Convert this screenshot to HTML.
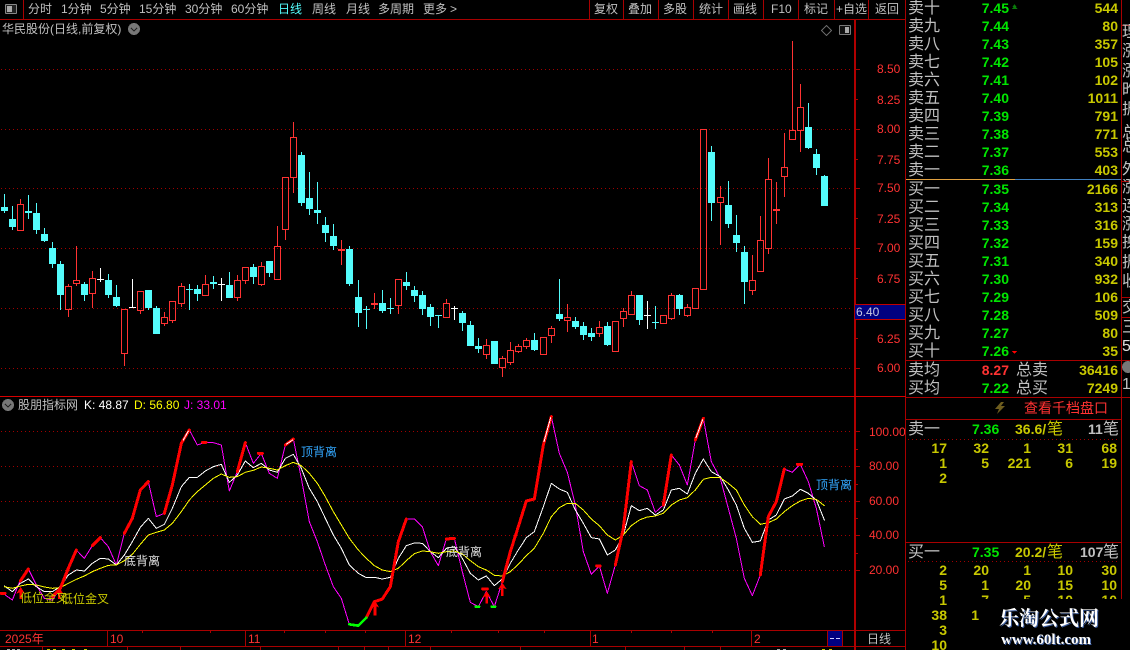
<!DOCTYPE html>
<html lang="zh">
<head>
<meta charset="utf-8">
<title>华民股份</title>
<style>
html,body{margin:0;padding:0;background:#000;width:1130px;height:650px;overflow:hidden}
body{position:relative;font-family:"Liberation Sans","WenQuanYi Zen Hei","Noto Sans CJK SC",sans-serif;color:#c0c0c0;font-size:12px}
.t{position:absolute;white-space:nowrap;line-height:16px;height:16px}
.ax{position:absolute;left:877px;color:#ff3232;font-size:12px;line-height:16px;letter-spacing:0;white-space:nowrap}
.ax2{position:absolute;left:869px;width:36px;overflow:hidden;color:#ff3232;font-size:12px;line-height:16px;white-space:nowrap}
.l{position:absolute;left:908px;margin-top:1px;font-size:16px;line-height:18px;height:18px;white-space:nowrap;color:#c0c0c0}
.p{position:absolute;right:121px;font-weight:bold;font-size:14px;line-height:18px;height:18px;color:#00e600;text-align:right}
.q{position:absolute;right:12px;font-weight:bold;font-size:14px;line-height:18px;height:18px;color:#c8c800;text-align:right}
.n{position:absolute;font-weight:bold;font-size:14px;line-height:16px;height:16px;color:#c8c800;text-align:right;width:40px}
.s{position:absolute;left:1122px;width:8px;overflow:hidden;font-size:16px;line-height:18px;height:18px;color:#c0c0c0;white-space:nowrap}
.sig{position:absolute;font-size:12px;line-height:14px;white-space:nowrap}
</style>
</head>
<body>
<svg width="1130" height="650" style="position:absolute;left:0;top:0" shape-rendering="crispEdges">
<!-- frame lines -->
<g fill="none" stroke="#a80000" stroke-width="1">
<path d="M0 19.5H906"/>
<path d="M23.5 0V19"/>
<path d="M589.5 0V19M623.5 0V19M658.5 0V19M693.5 0V19M728.5 0V19M763.5 0V19M798.5 0V19M834.5 0V19M868.5 0V19"/>
<path d="M905.5 0V650"/>
<path d="M1121.5 0V600"/>
<path d="M1121 25.5H1130M1121 181.5H1130M1121 297.5H1130M1121 317.5H1130M1121 360.5H1130M1121 397.5H1130"/>
<path d="M906 360.5H1121M906 397.5H1121M906 419.5H1121M906 542.5H1121"/>
<path d="M0 630.5H905M0 646.5H905"/>
<path d="M107.5 630V646M245.5 630V646M405.5 630V646M590.5 630V646M751.5 630V646M827.5 630V646M842.5 630V646"/>
<path d="M142.5 630V633M210.5 630V633M284.5 630V633M325.5 630V633M365.5 630V633M451.5 630V633M498.5 630V633M544.5 630V633M631.5 630V633M671.5 630V633M712.5 630V633"/>
<path d="M42.5 646V650M127.5 646V650M180.5 646V650M260.5 646V650M338.5 646V650M430.5 646V650M364.5 646V650M388.5 646V650M520.5 646V650M625.5 646V650M684.5 646V650M720.5 646V650"/>
<path d="M855 69.5H860M855 99.5H858M855 129.5H860M855 159.5H858M855 188.5H860M855 218.5H858M855 248.5H860M855 278.5H858M855 338.5H858M855 368.5H860"/>
<path d="M855 431.5H860M855 449.5H858M855 466.5H860M855 484.5H858M855 501.5H860M855 518.5H858M855 535.5H860M855 553.5H858M855 570.5H860"/>
</g>
<path d="M7 649h3v1H7zM12 649h3v1h-3zM17 649h3v1h-3zM777 649h3v1h-3zM783 649h3v1h-3z" fill="#aaa"/>
<path d="M47 649h3v1h-3zM53 649h3v1h-3zM62 649h3v1h-3zM72 649h3v1h-3zM84 649h3v1h-3zM822 649h3v1h-3zM829 649h3v1h-3z" fill="#c8c800"/>
<rect x="854" y="20" width="2" height="630" fill="#b00000"/>
<rect x="0" y="396" width="906" height="1" fill="#d80000"/>
<rect x="855" y="304" width="50" height="16" fill="#000080"/>
<path d="M855 304.5H906M855 319.5H906" stroke="#c00000" fill="none"/>
<rect x="828" y="631" width="14" height="15" fill="#000080"/>
<path d="M830 638.5h4M836 638.5h4" stroke="#ccf" fill="none"/>
<!-- grids -->
<g fill="none" stroke="#a00000" stroke-dasharray="1 3">
<path d="M1 69.5H853M1 129.5H853M1 188.5H853M1 248.5H853M1 308.5H853M1 368.5H853"/>
<path d="M1 431.5H853M1 466.5H853M1 501.5H853M1 535.5H853M1 570.5H853"/>
<path d="M908 439.5H1119M908 561.5H1119"/>
</g>
<!-- order book divider -->
<path d="M906 179.5H1015" stroke="#e0a040" fill="none"/>
<path d="M1015 179.5H1121" stroke="#4080c0" fill="none"/>
<!-- cyan candles -->
<path fill="none" stroke="#54fcfc" d="M4.5 194V213M12.5 206V230M28.5 195V219M36.5 203V234M44.5 228V242M52.5 242V268M60.5 261V310M84.5 282V301M108.5 274V298M116.5 285V307M148.5 290V310M156.5 306V334M189.5 284V310M197.5 285V301M213.5 276V289M229.5 272V298M253.5 264V284M269.5 261V277M301.5 152V206M309.5 172V215M317.5 182V224M325.5 217V242M333.5 224V250M349.5 246V286M358.5 280V327M366.5 306V329M382.5 290V313M390.5 298V314M406.5 272V290M414.5 286V302M422.5 291V315M430.5 304V326M438.5 315V328M462.5 311V331M470.5 321V346M478.5 338V353M494.5 341V364M534.5 333V351M559.5 279V321M575.5 317V329M583.5 322V340M591.5 328V341M607.5 322V346M639.5 295V325M655.5 306V329M679.5 294V315M711.5 146V221M728.5 181V228M736.5 215V252M744.5 246V304M808.5 103V149M816.5 149V175M824.5 175V206"/>
<path fill="#54fcfc" d="M1 207h7V211h-7zM9 219h7V227h-7zM25 211h7V213h-7zM33 213h7V230h-7zM41 234h7V241h-7zM49 248h7V264h-7zM57 264h7V295h-7zM81 284h7V295h-7zM105 280h7V295h-7zM113 297h7V306h-7zM145 290h7V308h-7zM153 308h7V334h-7zM186 289h7V290h-7zM194 289h7V294h-7zM210 282h7V284h-7zM226 285h7V298h-7zM250 267h7V277h-7zM266 261h7V273h-7zM298 155h7V203h-7zM306 198h7V209h-7zM314 210h7V213h-7zM322 225h7V233h-7zM330 236h7V246h-7zM346 249h7V284h-7zM355 297h7V313h-7zM363 309h7V310h-7zM379 303h7V311h-7zM387 308h7V309h-7zM403 282h7V286h-7zM411 290h7V296h-7zM419 295h7V309h-7zM427 307h7V317h-7zM435 315h7V316h-7zM459 313h7V323h-7zM467 325h7V346h-7zM475 346h7V349h-7zM491 341h7V364h-7zM531 340h7V350h-7zM556 314h7V319h-7zM572 321h7V327h-7zM580 326h7V335h-7zM588 333h7V337h-7zM604 326h7V345h-7zM636 295h7V320h-7zM652 322h7V323h-7zM676 295h7V309h-7zM708 152h7V203h-7zM725 205h7V224h-7zM733 235h7V243h-7zM741 252h7V282h-7zM805 127h7V148h-7zM813 154h7V168h-7zM821 176h7V206h-7z"/>
<!-- red candles -->
<path fill="none" stroke="#ff3232" d="M20.5 199V204M68.5 284V286M68.5 309V317M76.5 246V280M76.5 283V286M92.5 271V278M92.5 293V308M124.5 353V366M140.5 310V314M164.5 312V317M164.5 323V326M172.5 320V323M181.5 283V286M181.5 303V307M205.5 275V284M205.5 295V296M237.5 275V280M237.5 297V301M245.5 280V284M261.5 262V266M261.5 284V286M277.5 226V246M285.5 229V240M293.5 122V137M293.5 177V193M341.5 240V265M374.5 293V309M398.5 305V314M446.5 299V303M486.5 339V345M486.5 354V359M502.5 356V358M502.5 367V377M510.5 342V350M510.5 362V365M518.5 344V346M518.5 351V353M526.5 338V340M526.5 346V349M551.5 326V328M551.5 335V343M567.5 304V317M567.5 320V332M599.5 321V327M599.5 333V337M623.5 308V311M623.5 318V327M631.5 291V295M631.5 314V315M671.5 293V295M671.5 318V320M687.5 304V307M687.5 315V317M720.5 186V197M720.5 202V245M752.5 255V280M752.5 290V295M760.5 216V240M768.5 158V179M768.5 248V254M776.5 182V224M784.5 133V167M784.5 176V197M792.5 41V130M800.5 84V107M800.5 130V152"/>
<path fill="none" stroke="#ff3232" d="M17.5 204.5h6V230.5h-6zM65.5 286.5h6V309.5h-6zM73.5 280.5h6V283.5h-6zM89.5 278.5h6V293.5h-6zM121.5 309.5h6V353.5h-6zM137.5 291.5h6V310.5h-6zM161.5 317.5h6V323.5h-6zM169.5 301.5h6V320.5h-6zM178.5 286.5h6V303.5h-6zM202.5 284.5h6V295.5h-6zM234.5 280.5h6V297.5h-6zM242.5 267.5h6V280.5h-6zM258.5 266.5h6V284.5h-6zM274.5 246.5h6V279.5h-6zM282.5 177.5h6V229.5h-6zM290.5 137.5h6V177.5h-6zM395.5 279.5h6V305.5h-6zM443.5 303.5h6V317.5h-6zM483.5 345.5h6V354.5h-6zM499.5 358.5h6V367.5h-6zM507.5 350.5h6V362.5h-6zM515.5 346.5h6V351.5h-6zM523.5 340.5h6V346.5h-6zM540.5 337.5h6V354.5h-6zM548.5 328.5h6V335.5h-6zM564.5 317.5h6V320.5h-6zM596.5 327.5h6V333.5h-6zM612.5 321.5h6V351.5h-6zM620.5 311.5h6V318.5h-6zM628.5 295.5h6V314.5h-6zM660.5 315.5h6V323.5h-6zM668.5 295.5h6V318.5h-6zM684.5 307.5h6V315.5h-6zM692.5 288.5h6V308.5h-6zM700.5 129.5h6V289.5h-6zM717.5 197.5h6V202.5h-6zM749.5 280.5h6V290.5h-6zM757.5 240.5h6V271.5h-6zM765.5 179.5h6V248.5h-6zM781.5 167.5h6V176.5h-6zM789.5 130.5h6V139.5h-6zM797.5 107.5h6V130.5h-6z"/>
<path fill="#ff3232" d="M338 249h7v2h-7zM371 303h7v2h-7zM773 209h7v2h-7z"/>
<!-- white doji -->
<path fill="none" stroke="#fff" d="M100.5 268V282M132.5 279V308M221.5 278V301M454.5 306V320M647.5 301V329M97 279.5h7M129 307.5h7M218 284.5h7M451 308.5h7M644 315.5h7"/>
<!-- KDJ -->
<g transform="translate(0,395) scale(.33333)" fill="none" stroke-linejoin="round" stroke-linecap="round">
<polyline stroke="#ff00ff" stroke-width="3" points="13,598 37,615 61,555 85,522 109,570 133,610 157,615 181,580 205,520 229,465 253,490 277,452 301,428 325,455 349,510 373,415 397,370 421,285 445,260 469,365 493,355 517,270 544,145 568,105 592,150 616,142 640,143 664,150 688,288 712,230 736,143 760,205 784,175 808,235 832,250 856,150 880,132 904,250 928,380 952,440 976,510 1000,575 1024,610 1048,688 1075,692 1099,668 1123,620 1147,612 1171,575 1195,440 1219,372 1243,372 1267,395 1291,470 1315,512 1339,432 1363,430 1387,530 1411,622 1435,635 1459,590 1483,635 1507,560 1531,470 1555,395 1579,318 1603,312 1630,150 1654,65 1678,175 1702,232 1726,330 1750,470 1774,538 1798,513 1822,595 1846,510 1870,400 1894,200 1918,272 1942,285 1966,352 1990,330 2014,180 2038,210 2062,270 2086,135 2110,70 2134,200 2161,250 2185,340 2209,430 2233,550 2257,602 2281,540 2305,365 2329,320 2353,222 2377,232 2401,208 2425,260 2449,340 2473,455"/>
<polyline stroke="#ffffff" stroke-width="3" points="13,573 37,590 61,565 85,552 109,575 133,590 157,590 181,575 205,540 229,525 253,528 277,505 301,490 325,492 349,510 373,480 397,440 421,397 445,370 469,400 493,388 517,340 544,275 568,247 592,247 616,228 640,215 664,208 688,262 712,240 736,198 760,218 784,205 808,225 832,232 856,190 880,178 904,220 928,280 952,320 976,370 1000,420 1024,460 1048,510 1075,535 1099,548 1123,547 1147,552 1171,547 1195,490 1219,452 1243,444 1267,445 1291,470 1315,488 1339,460 1363,455 1387,490 1411,535 1435,555 1459,543 1483,572 1507,552 1531,505 1555,465 1579,428 1603,410 1630,335 1654,265 1678,282 1702,292 1726,345 1750,385 1774,428 1798,432 1822,480 1846,465 1870,420 1894,332 1918,347 1942,340 1966,360 1990,345 2014,285 2038,280 2062,297 2086,235 2110,192 2134,230 2161,245 2185,285 2209,330 2233,400 2257,442 2281,438 2305,375 2329,360 2353,312 2377,303 2401,283 2425,295 2449,315 2473,375"/>
<polyline stroke="#ffff00" stroke-width="3" points="13,575 37,580 61,573 85,568 109,570 133,576 157,580 181,578 205,565 229,553 253,543 277,530 301,520 325,511 349,510 373,497 397,478 421,448 445,420 469,412 493,405 517,385 544,350 568,315 592,290 616,270 640,250 664,237 688,247 712,245 736,232 760,226 784,216 808,220 832,225 856,212 880,202 904,212 928,235 952,265 976,305 1000,350 1024,390 1048,430 1075,465 1099,490 1123,512 1147,525 1171,530 1195,520 1219,497 1243,476 1267,468 1291,470 1315,475 1339,470 1363,468 1387,477 1411,497 1435,515 1459,525 1483,541 1507,543 1531,530 1555,508 1579,482 1603,460 1630,415 1654,365 1678,338 1702,325 1726,325 1750,345 1774,372 1798,392 1822,420 1846,435 1870,420 1894,392 1918,375 1942,366 1966,363 1990,355 2014,330 2038,315 2062,308 2086,285 2110,253 2134,247 2161,248 2185,265 2209,285 2233,330 2257,365 2281,388 2305,383 2329,372 2353,350 2377,332 2401,318 2425,310 2449,313 2473,332"/>
<g stroke="#ff0000" stroke-width="9">
<polyline points="3,595 15,595"/>
<polyline points="61,558 85,522"/>
<polyline points="157,605 181,580 205,520 229,465"/>
<polyline points="277,452 301,428"/>
<polyline points="373,415 397,370 421,285 445,260"/>
<polyline points="493,355 517,270 544,145 568,105"/>
<polyline points="608,142 618,142"/>
<polyline points="712,230 736,143"/>
<polyline points="775,175 787,175"/>
<polyline points="856,150 880,132"/>
<polyline points="1099,668 1123,620 1147,612 1171,575 1195,440 1219,372"/>
<polyline points="1339,432 1363,430"/>
<polyline points="1448,582 1462,582"/>
<polyline points="1507,560 1531,470 1555,395 1579,318 1603,312 1630,150 1654,65"/>
<polyline points="1790,513 1800,513"/>
<polyline points="1846,510 1870,400 1894,200"/>
<polyline points="1990,330 2014,180"/>
<polyline points="2086,135 2110,70"/>
<polyline points="2281,540 2305,365 2329,320 2353,222"/>
<polyline points="2392,208 2405,208"/>
</g>
<g stroke="#ffffff" stroke-width="3">
<polyline points="550,135 565,108"/>
<polyline points="860,147 878,135"/>
<polyline points="1632,140 1652,68"/>
<polyline points="2088,128 2108,74"/>
</g>
<g stroke="#00ff00" stroke-width="8">
<polyline points="1048,688 1075,692 1099,668"/>
<polyline points="1427,635 1437,635"/>
<polyline points="1475,635 1485,635"/>
</g>
<g fill="#ff0000" stroke="none">
<polygon points="62,576 75,596 66,592 66,612 58,612 58,592 49,596"/>
<polygon points="178,578 191,598 182,594 182,612 174,612 174,594 165,598"/>
<polygon points="1125,618 1138,638 1129,634 1129,662 1121,662 1121,634 1112,638"/>
<polygon points="1460,588 1473,608 1464,604 1464,625 1456,625 1456,604 1447,608"/>
<polygon points="1507,563 1520,583 1511,579 1511,603 1503,603 1503,579 1494,583"/>
</g>
</g>
<!-- top left icon -->
<rect x="5.5" y="4.5" width="11" height="9" rx="1" fill="#222" stroke="#888"/>
<rect x="7" y="6" width="5" height="6" fill="#aaa"/>
<!-- chart top-right icons -->
<path d="M826.5 25.5l5 5-5 5-5-5z" fill="none" stroke="#666"/>
<rect x="839.5" y="25.5" width="11" height="9" rx="1" fill="#111" stroke="#777"/>
<rect x="845" y="27" width="4" height="6" fill="#aaa"/>
<!-- round toggles -->
<circle cx="134" cy="29" r="6" fill="#777"/>
<path d="M131 28l3 3 3-3" fill="none" stroke="#222" stroke-width="1.2"/>
<circle cx="8" cy="405" r="6" fill="#777"/>
<path d="M5 404l3 3 3-3" fill="none" stroke="#222" stroke-width="1.2"/>
<circle cx="1128" cy="367" r="6" fill="#777"/>
<!-- bolt -->
<path d="M1001 402L995 409H999L997 414L1005 406H1001L1004 402Z" fill="#6e5d1e" shape-rendering="auto"/>
<!-- book arrows -->
<path d="M1012.5 356l-2.5-3h5z" fill="#ff0000" transform="translate(2,-2)"/>
<path d="M1014.5 4l-2 3h1l-2 2h6l-2-2h1z" fill="#0a7a0a"/>
</svg>

<!-- toolbar -->
<span class="t" style="left:28px;top:1px">分时</span>
<span class="t" style="left:61px;top:1px">1分钟</span>
<span class="t" style="left:100px;top:1px">5分钟</span>
<span class="t" style="left:139px;top:1px">15分钟</span>
<span class="t" style="left:185px;top:1px">30分钟</span>
<span class="t" style="left:231px;top:1px">60分钟</span>
<span class="t" style="left:278px;top:1px;color:#54fcfc">日线</span>
<span class="t" style="left:312px;top:1px">周线</span>
<span class="t" style="left:346px;top:1px">月线</span>
<span class="t" style="left:378px;top:1px">多周期</span>
<span class="t" style="left:423px;top:1px">更多</span>
<span class="t" style="left:450px;top:1px">&gt;</span>
<span class="t" style="left:594px;top:1px">复权</span>
<span class="t" style="left:628px;top:1px">叠加</span>
<span class="t" style="left:663px;top:1px">多股</span>
<span class="t" style="left:699px;top:1px">统计</span>
<span class="t" style="left:733px;top:1px">画线</span>
<span class="t" style="left:771px;top:1px">F10</span>
<span class="t" style="left:804px;top:1px">标记</span>
<span class="t" style="left:836px;top:1px">+自选</span>
<span class="t" style="left:875px;top:1px">返回</span>

<span class="t" style="left:2px;top:21px">华民股份(日线,前复权)</span>

<!-- price axis -->
<span class="ax" style="top:61px">8.50</span>
<span class="ax" style="top:92px">8.25</span>
<span class="ax" style="top:121px">8.00</span>
<span class="ax" style="top:152px">7.75</span>
<span class="ax" style="top:180px">7.50</span>
<span class="ax" style="top:211px">7.25</span>
<span class="ax" style="top:240px">7.00</span>
<span class="ax" style="top:271px">6.75</span>
<span class="ax" style="top:331px">6.25</span>
<span class="ax" style="top:360px">6.00</span>
<span class="t" style="left:856px;top:304px;color:#c8c8e0">6.40</span>

<!-- indicator header -->
<span class="t" style="left:18px;top:397px">股朋指标网</span>
<span class="t" style="left:84px;top:397px;color:#fff">K: 48.87</span>
<span class="t" style="left:134px;top:397px;color:#ffff00">D: 56.80</span>
<span class="t" style="left:184px;top:397px;color:#ff00ff">J: 33.01</span>

<span class="ax2" style="top:424px">100.00</span>
<span class="ax2" style="top:458px">80.00</span>
<span class="ax2" style="top:493px">60.00</span>
<span class="ax2" style="top:527px">40.00</span>
<span class="ax2" style="top:562px">20.00</span>

<!-- signal labels -->
<span class="sig" style="left:20px;top:591px;color:#c8c800">低位金叉</span>
<span class="sig" style="left:61px;top:592px;color:#c8c800">低位金叉</span>
<span class="sig" style="left:124px;top:554px;color:#e0e0e0">底背离</span>
<span class="sig" style="left:301px;top:445px;color:#33a8ff">顶背离</span>
<span class="sig" style="left:446px;top:545px;color:#e0e0e0">底背离</span>
<span class="sig" style="left:816px;top:478px;color:#33a8ff">顶背离</span>

<!-- time axis -->
<span class="t" style="left:5px;top:631px;color:#ff3232;font-size:12px">2025年</span>
<span class="t" style="left:110px;top:631px;color:#ff3232">10</span>
<span class="t" style="left:248px;top:631px;color:#ff3232">11</span>
<span class="t" style="left:408px;top:631px;color:#ff3232">12</span>
<span class="t" style="left:592px;top:631px;color:#ff3232">1</span>
<span class="t" style="left:754px;top:631px;color:#ff3232">2</span>
<span class="t" style="left:867px;top:631px">日线</span>

<!-- order book -->
<span class="l" style="top:-1px">卖十</span><span class="p" style="top:-1px">7.45</span><span class="q" style="top:-1px">544</span>
<span class="l" style="top:17px">卖九</span><span class="p" style="top:17px">7.44</span><span class="q" style="top:17px">80</span>
<span class="l" style="top:35px">卖八</span><span class="p" style="top:35px">7.43</span><span class="q" style="top:35px">357</span>
<span class="l" style="top:53px">卖七</span><span class="p" style="top:53px">7.42</span><span class="q" style="top:53px">105</span>
<span class="l" style="top:71px">卖六</span><span class="p" style="top:71px">7.41</span><span class="q" style="top:71px">102</span>
<span class="l" style="top:89px">卖五</span><span class="p" style="top:89px">7.40</span><span class="q" style="top:89px">1011</span>
<span class="l" style="top:107px">卖四</span><span class="p" style="top:107px">7.39</span><span class="q" style="top:107px">791</span>
<span class="l" style="top:125px">卖三</span><span class="p" style="top:125px">7.38</span><span class="q" style="top:125px">771</span>
<span class="l" style="top:143px">卖二</span><span class="p" style="top:143px">7.37</span><span class="q" style="top:143px">553</span>
<span class="l" style="top:161px">卖一</span><span class="p" style="top:161px">7.36</span><span class="q" style="top:161px">403</span>
<span class="l" style="top:180px">买一</span><span class="p" style="top:180px">7.35</span><span class="q" style="top:180px">2166</span>
<span class="l" style="top:198px">买二</span><span class="p" style="top:198px">7.34</span><span class="q" style="top:198px">313</span>
<span class="l" style="top:216px">买三</span><span class="p" style="top:216px">7.33</span><span class="q" style="top:216px">316</span>
<span class="l" style="top:234px">买四</span><span class="p" style="top:234px">7.32</span><span class="q" style="top:234px">159</span>
<span class="l" style="top:252px">买五</span><span class="p" style="top:252px">7.31</span><span class="q" style="top:252px">340</span>
<span class="l" style="top:270px">买六</span><span class="p" style="top:270px">7.30</span><span class="q" style="top:270px">932</span>
<span class="l" style="top:288px">买七</span><span class="p" style="top:288px">7.29</span><span class="q" style="top:288px">106</span>
<span class="l" style="top:306px">买八</span><span class="p" style="top:306px">7.28</span><span class="q" style="top:306px">509</span>
<span class="l" style="top:324px">买九</span><span class="p" style="top:324px">7.27</span><span class="q" style="top:324px">80</span>
<span class="l" style="top:342px">买十</span><span class="p" style="top:342px">7.26</span><span class="q" style="top:342px">35</span>

<span class="l" style="top:361px">卖均</span><span class="p" style="top:361px;color:#ff3232">8.27</span><span class="l" style="top:361px;left:1016px">总卖</span><span class="q" style="top:361px">36416</span>
<span class="l" style="top:379px">买均</span><span class="p" style="top:379px">7.22</span><span class="l" style="top:379px;left:1016px">总买</span><span class="q" style="top:379px">7249</span>

<span class="t" style="left:1024px;top:400px;font-size:14px;color:#ff3232">查看千档盘口</span>

<!-- tick detail -->
<span class="l" style="top:420px">卖一</span>
<span class="q" style="top:420px;right:auto;left:972px;color:#00e600">7.36</span>
<span class="q" style="top:420px;right:auto;left:1015px">36.6/</span><span class="l" style="top:420px;left:1047px;color:#c8c800">笔</span>
<span class="q" style="top:420px;right:auto;left:1088px;color:#c0c0c0">11</span><span class="l" style="top:420px;left:1103px">笔</span>

<span class="n" style="left:907px;top:440px">17</span><span class="n" style="left:949px;top:440px">32</span><span class="n" style="left:991px;top:440px">1</span><span class="n" style="left:1033px;top:440px">31</span><span class="n" style="left:1077px;top:440px">68</span>
<span class="n" style="left:907px;top:455px">1</span><span class="n" style="left:949px;top:455px">5</span><span class="n" style="left:991px;top:455px">221</span><span class="n" style="left:1033px;top:455px">6</span><span class="n" style="left:1077px;top:455px">19</span>
<span class="n" style="left:907px;top:470px">2</span>

<span class="l" style="top:543px">买一</span>
<span class="q" style="top:543px;right:auto;left:972px;color:#00e600">7.35</span>
<span class="q" style="top:543px;right:auto;left:1015px">20.2/</span><span class="l" style="top:543px;left:1047px;color:#c8c800">笔</span>
<span class="q" style="top:543px;right:auto;left:1080px;color:#c0c0c0">107</span><span class="l" style="top:543px;left:1103px">笔</span>

<span class="n" style="left:907px;top:562px">2</span><span class="n" style="left:949px;top:562px">20</span><span class="n" style="left:991px;top:562px">1</span><span class="n" style="left:1033px;top:562px">10</span><span class="n" style="left:1077px;top:562px">30</span>
<span class="n" style="left:907px;top:577px">5</span><span class="n" style="left:949px;top:577px">1</span><span class="n" style="left:991px;top:577px">20</span><span class="n" style="left:1033px;top:577px">15</span><span class="n" style="left:1077px;top:577px">10</span>
<span class="n" style="left:907px;top:592px">1</span><span class="n" style="left:949px;top:592px">7</span><span class="n" style="left:991px;top:592px">5</span><span class="n" style="left:1033px;top:592px">10</span><span class="n" style="left:1077px;top:592px">10</span>
<span class="n" style="left:907px;top:607px">38</span><span class="n" style="left:939px;top:607px">1</span>
<span class="n" style="left:907px;top:622px">3</span>
<span class="n" style="left:907px;top:637px">10</span>

<!-- clipped far-right column -->
<span class="s" style="top:24px">理</span>
<span class="s" style="top:43px">涨</span>
<span class="s" style="top:63px">涨</span>
<span class="s" style="top:82px">昨</span>
<span class="s" style="top:101px">振</span>
<span class="s" style="top:124px">总</span>
<span class="s" style="top:138px">总</span>
<span class="s" style="top:161px">外</span>
<span class="s" style="top:179px">涨</span>
<span class="s" style="top:198px">连</span>
<span class="s" style="top:216px">涨</span>
<span class="s" style="top:234px">换</span>
<span class="s" style="top:254px">振</span>
<span class="s" style="top:273px">收</span>
<span class="s" style="top:299px">交</span>
<span class="s" style="top:319px">三</span>
<span class="s" style="top:338px;color:#e0e0e0">5</span>
<span class="s" style="top:376px">1</span>

<!-- watermark -->
<div style="position:absolute;left:980px;top:599px;width:150px;height:51px;background:#000"></div>
<div style="position:absolute;left:999px;top:608px;font:bold 20px/22px 'Liberation Serif','Noto Serif CJK SC',serif;color:#fff;white-space:nowrap;text-shadow:1px 1px 0 #3a5a9a">乐淘公式网</div>
<div style="position:absolute;left:1001px;top:632px;font:bold 15px/16px 'Liberation Serif',serif;color:#fff;white-space:nowrap;text-shadow:1px 1px 0 #3a5a9a">www.60lt.com</div>
</body>
</html>
